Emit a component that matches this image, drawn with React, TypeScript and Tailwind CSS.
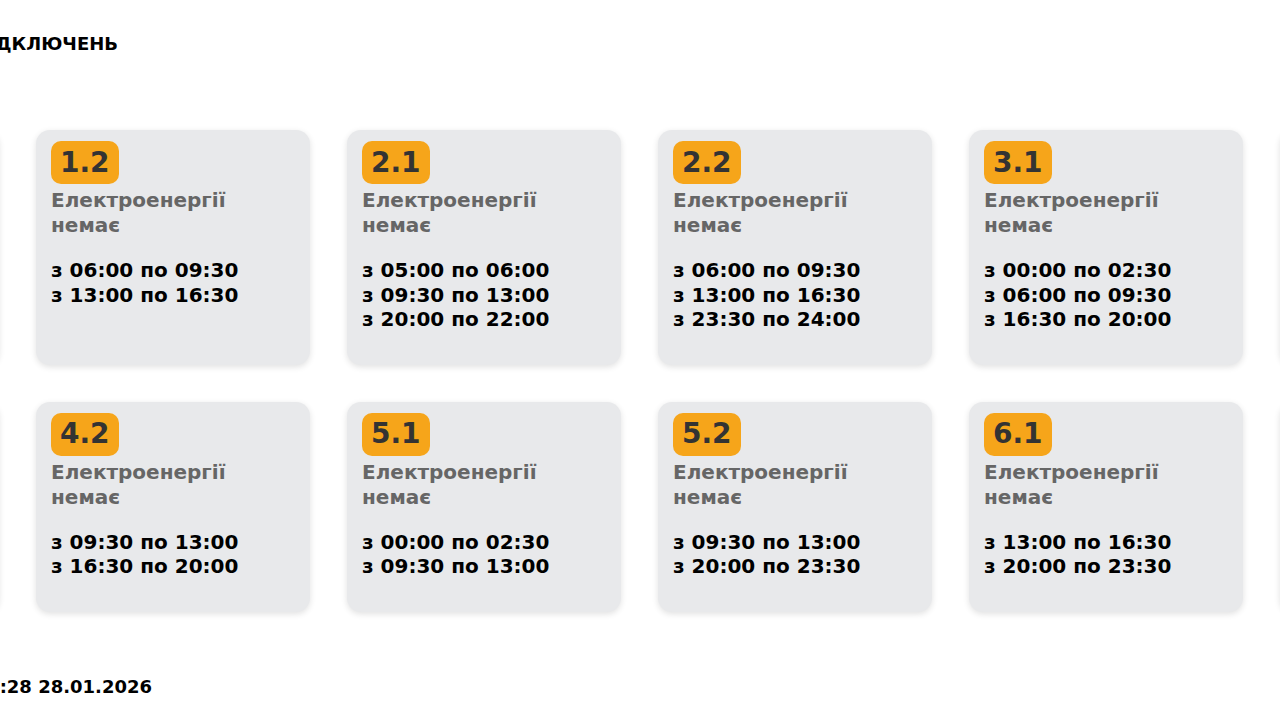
import React from "react";

type Group = {
    id: string;
    periods: string[];
};

const rows: Group[][] = [
    [
        { id: "1.1", periods: ["з 06:00 по 09:30", "з 13:00 по 16:30"] },
        { id: "1.2", periods: ["з 06:00 по 09:30", "з 13:00 по 16:30"] },
        { id: "2.1", periods: ["з 05:00 по 06:00", "з 09:30 по 13:00", "з 20:00 по 22:00"] },
        { id: "2.2", periods: ["з 06:00 по 09:30", "з 13:00 по 16:30", "з 23:30 по 24:00"] },
        { id: "3.1", periods: ["з 00:00 по 02:30", "з 06:00 по 09:30", "з 16:30 по 20:00"] },
        { id: "3.2", periods: ["з 00:00 по 02:30", "з 16:30 по 20:00"] },
    ],
    [
        { id: "4.1", periods: ["з 09:30 по 13:00", "з 16:30 по 20:00"] },
        { id: "4.2", periods: ["з 09:30 по 13:00", "з 16:30 по 20:00"] },
        { id: "5.1", periods: ["з 00:00 по 02:30", "з 09:30 по 13:00"] },
        { id: "5.2", periods: ["з 09:30 по 13:00", "з 20:00 по 23:30"] },
        { id: "6.1", periods: ["з 13:00 по 16:30", "з 20:00 по 23:30"] },
        { id: "6.2", periods: ["з 13:00 по 16:30", "з 20:00 по 23:30"] },
    ],
];

function GroupCard({ group }: { group: Group }) {
    return (
        <div className="bg-[#e8e9eb] rounded-[14px] px-[15px] pt-[11px] pb-[33px] shadow-[0_2px_6px_rgba(0,0,0,0.12)]">
            <span className="inline-flex items-center h-[43px] px-[9px] rounded-[10px] bg-[#f6a51a] text-[#333333] text-[28px] font-bold">
                {group.id}
            </span>
            <p className="mt-[4px] text-[20px] leading-[25px] font-bold text-[#666666]">
                Електроенергії
                <br />
                немає
            </p>
            <div className="mt-[20px] text-[20px] leading-[24.5px] font-bold text-black">
                {group.periods.map((p, i) => (
                    <p key={i}>{p}</p>
                ))}
            </div>
        </div>
    );
}

export default function App() {
    return (
        <div
            className="w-full h-[720px] overflow-hidden bg-white flex justify-center"
            style={{ fontFamily: '"DejaVu Sans", sans-serif' }}
        >
            <div className="w-[1830px] shrink-0">
                <h1 className="pt-[34px] ml-[166px] text-[18px] leading-[20px] font-bold text-black">
                    ГРАФІК ВІДКЛЮЧЕНЬ
                </h1>

                <div className="mt-[76px] flex flex-col gap-[37px]">
                    {rows.map((row, r) => (
                        <div key={r} className="grid grid-cols-[repeat(6,274px)] gap-[37px] items-stretch">
                            {row.map((g) => (
                                <GroupCard key={g.id} group={g} />
                            ))}
                        </div>
                    ))}
                </div>

                <p className="mt-[64px] ml-[123px] text-[18px] leading-[22px] font-bold text-black">
                    Оновлено о 11:28 28.01.2026
                </p>
            </div>
        </div>
    );
}
